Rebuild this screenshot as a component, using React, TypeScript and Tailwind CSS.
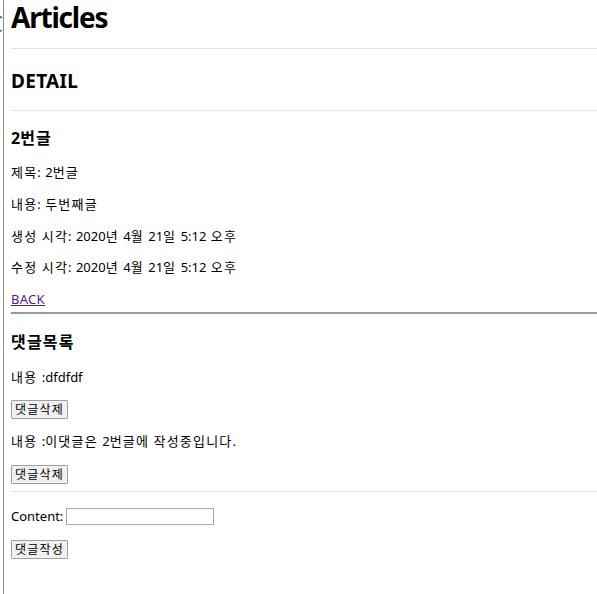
import React from 'react';

const comments = [
  { id: 1, content: 'dfdfdf' },
  { id: 2, content: '이댓글은 2번글에 작성중입니다.' },
];

// Hangul runs get a little extra spacing so they sit as wide as in the screenshot
const K = ({ text }: { text: string }) => (
  <>
    {text.split(/([\uAC00-\uD7A3]+)/).map((part, i) =>
      /[\uAC00-\uD7A3]/.test(part) ? (
        <span key={i} className="tracking-[1.2px]">{part}</span>
      ) : (
        <React.Fragment key={i}>{part}</React.Fragment>
      )
    )}
  </>
);

const Btn = ({ children }: { children: string }) => (
  <button className="h-[19px] w-[57px] text-[12px] leading-none text-black bg-[#f0f0f0] border border-[#a0a0a0] rounded-[1px]">
    <K text={children} />
  </button>
);

const App = () => {
  return (
    <div className="flex h-[594px] w-[597px] overflow-hidden bg-white text-black font-['Noto_Sans','Noto_Sans_CJK_KR',sans-serif]">
      <div className="w-[3px] overflow-hidden flex justify-end pt-[12px]">
        <span className="text-[22px] leading-none text-[#555] shrink-0">C</span>
      </div>
      <div className="flex-1 border-l border-[#8a8a8a] pl-[7px]">
        <h1 className="text-[28px] font-bold leading-[32px] mt-[1px] h-[32px] tracking-[-1.2px]">Articles</h1>
        <hr className="mt-[15px] border-t border-[#e6e6e6]" />
        <h2 className="text-[19px] font-bold leading-[24px] h-[24px] mt-[20px] tracking-[0.3px]">DETAIL</h2>
        <hr className="mt-[17px] border-t border-[#e6e6e6]" />
        <h3 className="text-[16px] font-bold leading-[20px] h-[20px] mt-[17px]"><K text="2번글" /></h3>
        <div className="text-[13px] leading-[18px] [word-spacing:1px]">
          <p className="h-[18px] mt-[15px]"><K text="제목: 2번글" /></p>
          <p className="h-[18px] mt-[14px]"><K text="내용: 두번째글" /></p>
          <p className="h-[18px] mt-[14px]"><K text="생성 시각: 2020년 4월 21일 5:12 오후" /></p>
          <p className="h-[18px] mt-[13px]"><K text="수정 시각: 2020년 4월 21일 5:12 오후" /></p>
          <p className="h-[18px] mt-[14px]">
            <a href="#" className="text-[#551a8b] underline tracking-[0.3px]">BACK</a>
          </p>
        </div>
        <hr className="mt-[4px] border-t-2 border-[#9a9a9a]" />
        <h3 className="text-[16px] font-bold leading-[20px] h-[20px] mt-[18px] tracking-[-0.3px]"><K text="댓글목록" /></h3>
        <div className="text-[13px] leading-[18px] [word-spacing:1px]">
          {comments.map((c, i) => (
            <div key={c.id}>
              <p className={i === 0 ? 'h-[18px] mt-[16px]' : 'h-[18px] mt-[13px]'}><K text={`내용 :${c.content}`} /></p>
              <div className={i === 0 ? 'mt-[14px] h-[19px] flex' : 'mt-[15px] h-[19px] flex'}>
                <Btn>댓글삭제</Btn>
              </div>
            </div>
          ))}
        </div>
        <hr className="mt-[7px] border-t border-[#e6e6e6]" />
        <form className="text-[13px] leading-[18px]" onSubmit={e => e.preventDefault()}>
          <div className="mt-[15px] flex items-center h-[18px]">
            <label htmlFor="content">Content:</label>
            <input id="content" type="text" className="ml-[3px] w-[148px] h-[17px] border border-[#a9a9a9] bg-white" />
          </div>
          <div className="mt-[15px] flex">
            <Btn>댓글작성</Btn>
          </div>
        </form>
      </div>
    </div>
  );
};

export default App;
